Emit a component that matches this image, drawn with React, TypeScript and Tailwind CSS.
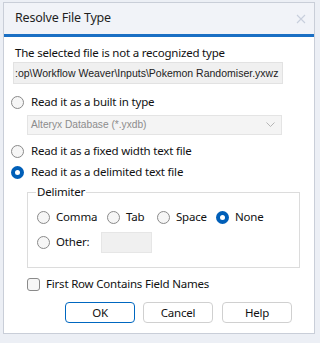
import React from "react";

const ui = { fontFamily: '"Noto Sans", "Open Sans", sans-serif', letterSpacing: "-0.2px" };
const arial = { fontFamily: '"Liberation Sans", Arial, sans-serif', letterSpacing: "0px" };

function Radio({ checked = false }: { checked?: boolean }) {
  if (checked) {
    return (
      <span className="flex h-[13px] w-[13px] shrink-0 items-center justify-center rounded-full bg-[#005fb8]">
        <span className="h-[5px] w-[5px] rounded-full bg-white" />
      </span>
    );
  }
  return <span className="h-[13px] w-[13px] shrink-0 rounded-full border border-[#8a8a8a] bg-[#f6f6f6]" />;
}

function RadioRow({ label, checked }: { label: string; checked?: boolean }) {
  return (
    <div className="flex h-[20px] items-center gap-[7px] pl-[7px]">
      <Radio checked={checked} />
      <span>{label}</span>
    </div>
  );
}

function DelimOption({ label, checked, w }: { label: string; checked?: boolean; w: string }) {
  return (
    <div className={`flex items-center gap-[6px] ${w}`}>
      <Radio checked={checked} />
      <span>{label}</span>
    </div>
  );
}

export default function App() {
  return (
    <div className="h-[343px] w-[320px] bg-[#eceff5] pl-[3px] pt-[2px] text-[11.5px] text-[#111]" style={ui}>
      <div className="flex h-[332px] w-[312px] flex-col border border-[#c9ced8] bg-white">
        {/* title bar */}
        <div className="flex h-[31px] items-center justify-between bg-[#f1f3f8] pl-[11px] pr-[8px]">
          <span className="text-[12.5px] text-[#1f1f1f]">Resolve File Type</span>
          <svg width="10" height="10" viewBox="0 0 10 10">
            <path d="M1 1 L9 9 M9 1 L1 9" stroke="#c8cfdc" strokeWidth="1.1" />
          </svg>
        </div>
        <div className="h-[3px] bg-[#1a6fc4]" />

        <div className="flex flex-col leading-[16px]">
          <p className="ml-[11px] mt-[8px]">The selected file is not a recognized type</p>
          <div
            className="ml-[9px] mt-[1px] flex h-[22px] w-[270px] items-center overflow-hidden whitespace-nowrap border border-[#e2e2e2] bg-[#f0f0f0] pl-[1px] text-[10.5px] text-[#222]"
            style={arial}
          >
            :op\Workflow Weaver\Inputs\Pokemon Randomiser.yxwz
          </div>

          <div className="mt-[8px]">
            <RadioRow label="Read it as a built in type" />
          </div>
          <div
            className="ml-[23px] mt-[3px] flex h-[20px] w-[255px] items-center justify-between border border-[#e4e4e4] bg-[#f4f4f4] pl-[3px] pr-[6px] text-[10.2px] text-[#8c8c8c]"
            style={arial}
          >
            <span>Alteryx Database (*.yxdb)</span>
            <svg width="9" height="6" viewBox="0 0 9 6">
              <path d="M0.5 0.5 L4.5 4.5 L8.5 0.5" fill="none" stroke="#b5b5b5" strokeWidth="1" />
            </svg>
          </div>
          <div className="mt-[6px]">
            <RadioRow label="Read it as a fixed width text file" />
          </div>
          <div className="mt-[1px]">
            <RadioRow label="Read it as a delimited text file" checked />
          </div>

          <fieldset className="ml-[23px] mt-[2px] w-[273px] border border-[#dcdcdc] pb-[14px] pl-[9px]">
            <legend className="ml-[-1px] px-[1px]">Delimiter</legend>
            <div className="mt-[7px] flex h-[20px] items-center">
              <DelimOption label="Comma" w="w-[70px]" />
              <DelimOption label="Tab" w="w-[50px]" />
              <DelimOption label="Space" w="w-[59px]" />
              <DelimOption label="None" checked w="w-[60px]" />
            </div>
            <div className="mt-[4px] flex h-[22px] items-center">
              <DelimOption label="Other:" w="w-[64px]" />
              <div className="h-[21px] w-[51px] border border-[#e6e6e6] bg-[#f0f0f0]" />
            </div>
          </fieldset>

          <div className="ml-[23px] mt-[6px] flex h-[20px] items-center gap-[6px]">
            <span className="h-[13px] w-[13px] rounded-[3px] border border-[#8a8a8a] bg-[#f6f6f6]" />
            <span>First Row Contains Field Names</span>
          </div>

          <div className="ml-[61px] mt-[8px] flex gap-[8px]">
            <button className="h-[21px] w-[70px] rounded-[4px] border border-[#0067c0] bg-white leading-[19px]">OK</button>
            <button className="h-[21px] w-[70px] rounded-[4px] border border-[#d0d0d0] bg-white leading-[19px]">Cancel</button>
            <button className="ml-[1px] h-[21px] w-[70px] rounded-[4px] border border-[#d0d0d0] bg-white leading-[19px]">Help</button>
          </div>
        </div>
      </div>
    </div>
  );
}
